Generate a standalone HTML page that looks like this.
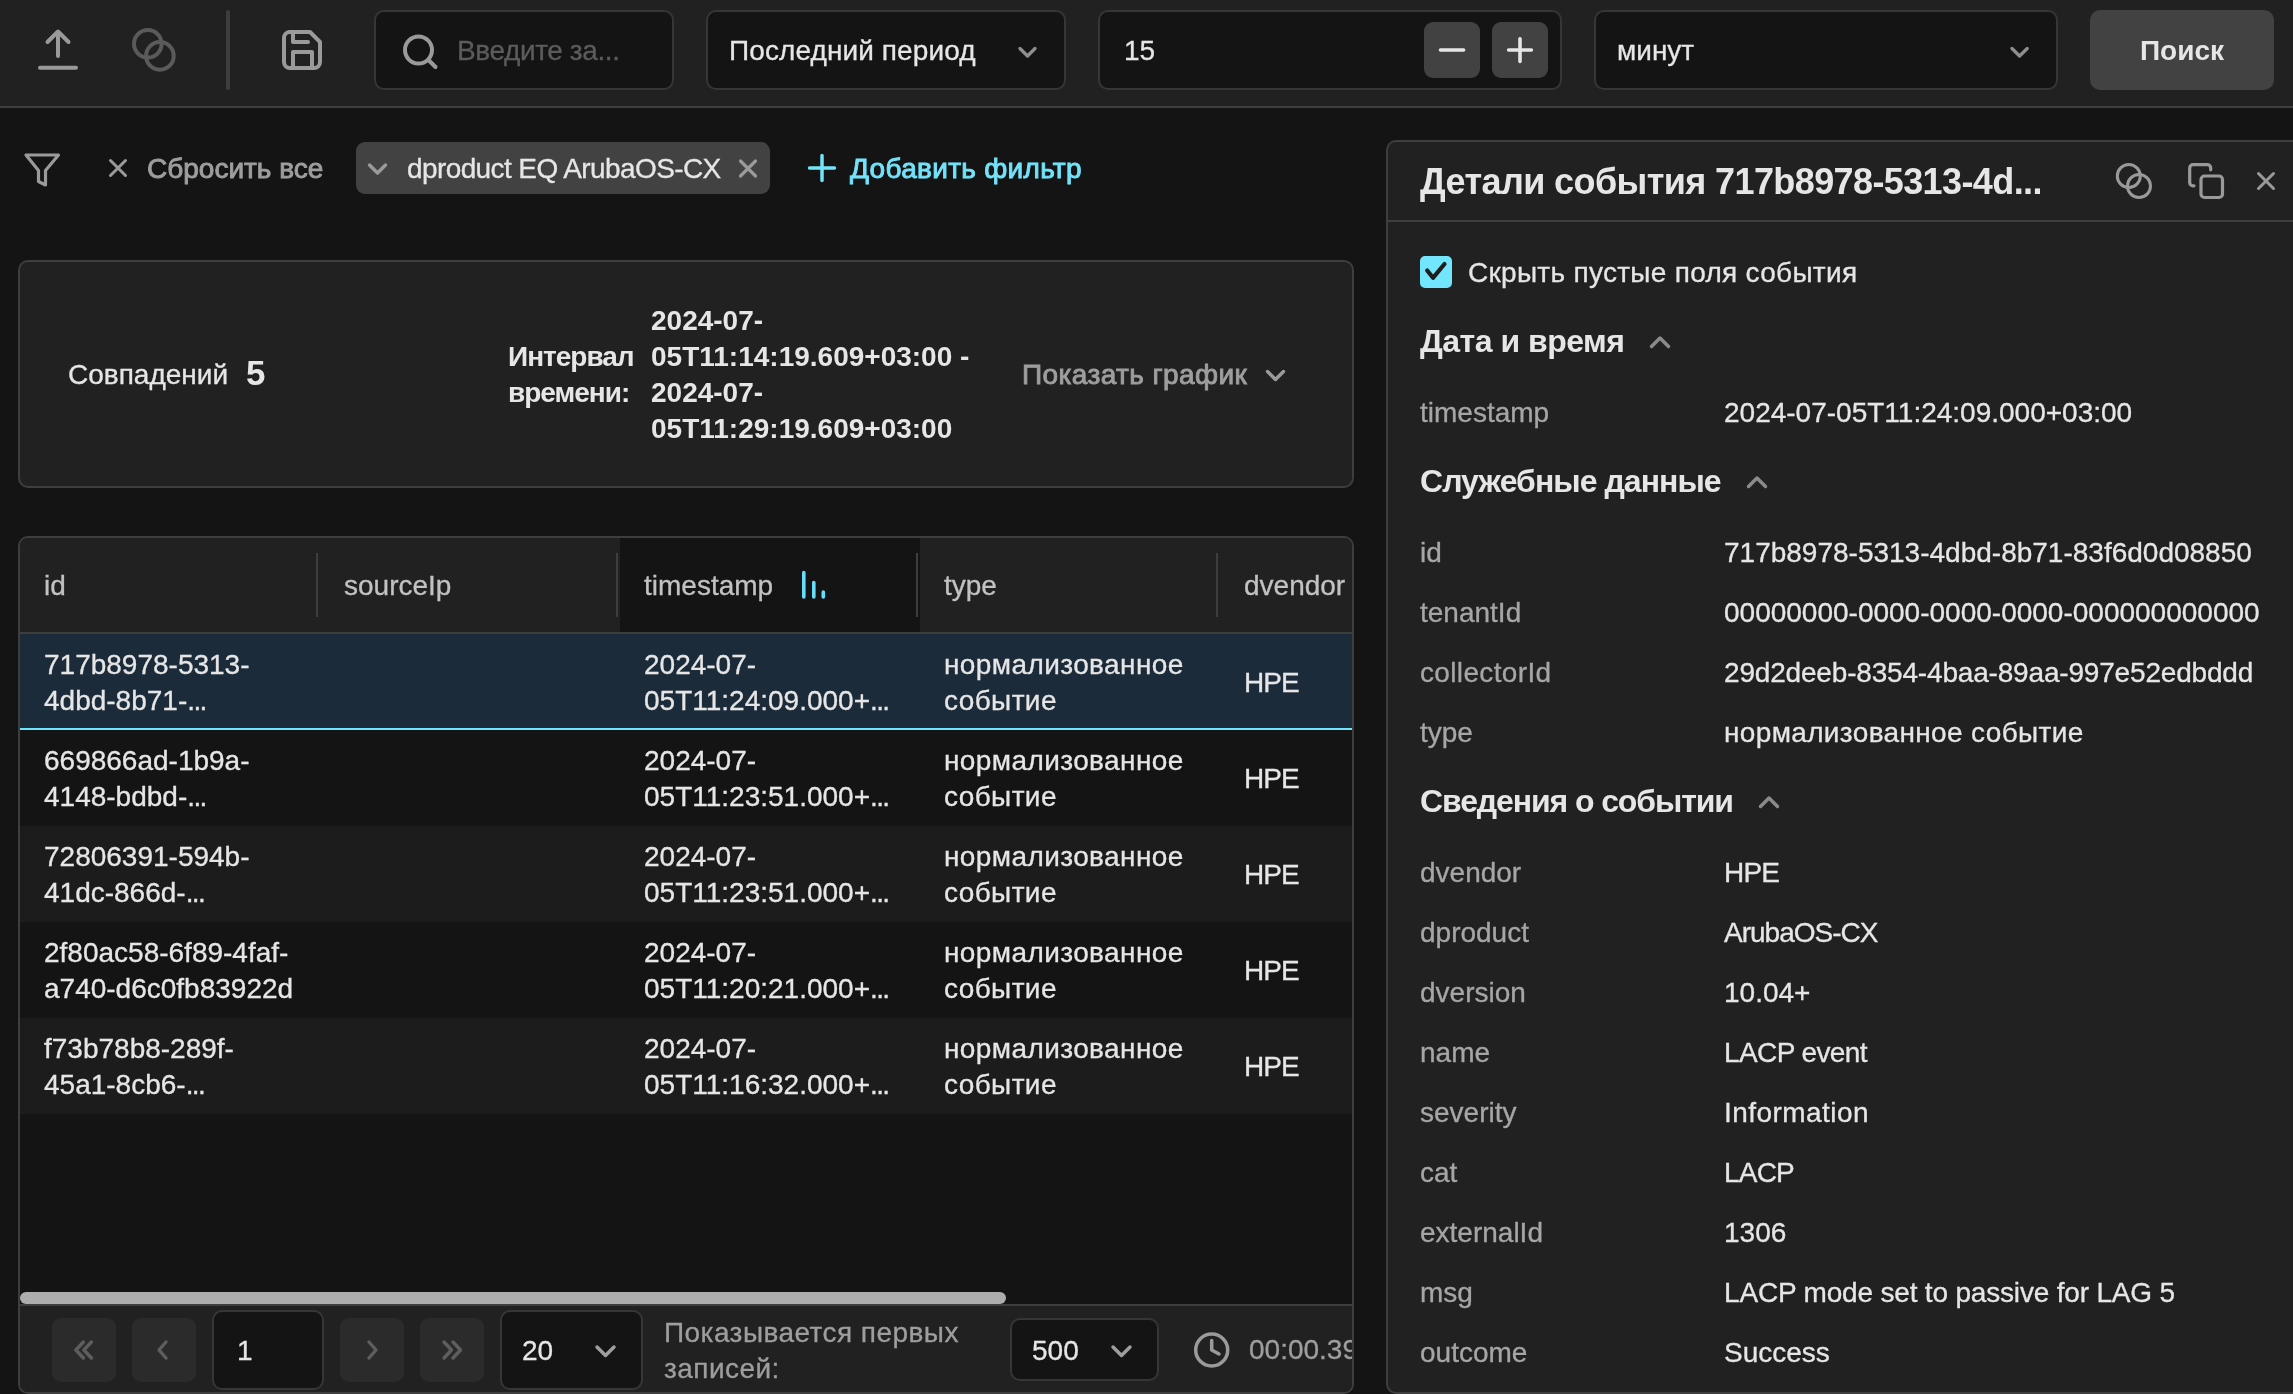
<!DOCTYPE html>
<html><head><meta charset="utf-8">
<style>
*{box-sizing:border-box}
html,body{margin:0;padding:0}
body{-webkit-text-stroke:0.3px currentColor;-webkit-font-smoothing:antialiased;width:2293px;height:1394px;overflow:hidden;background:#141414;font-family:"Liberation Sans",sans-serif;color:#e6e6e6;position:relative;font-size:28px;line-height:36px}
.a{position:absolute;will-change:transform}
.t{will-change:transform;position:absolute;white-space:nowrap;line-height:36px;font-size:28px;margin-top:1px}
svg{position:absolute;overflow:visible}
.hdr{left:0;top:0;width:2293px;height:108px;background:#212121;border-bottom:2px solid #3e3e3e}
.inp{position:absolute;background:#141414;border:2px solid #363636;border-radius:10px}
.btn{position:absolute;background:#424242;border-radius:10px}
.med{-webkit-text-stroke:0.9px currentColor}
.box{position:absolute;background:#212121;border:2px solid #3e3e3e;border-radius:10px}
.g{color:#9e9e9e}
.hd{color:#c2c2c2}
[style*="font-weight:700"]{-webkit-text-stroke:0}
</style></head><body>

<!-- TOP HEADER -->
<div class="a hdr"></div>
<!-- upload icon -->
<svg style="left:0;top:0" width="100" height="100" viewBox="0 0 100 100">
 <path d="M58 56 V32 M47.5 42 L58 31.5 L68.5 42 M40 67.8 H76" fill="none" stroke="#9a9a9a" stroke-width="4" stroke-linecap="round" stroke-linejoin="round"/>
</svg>
<!-- circles icon (disabled) -->
<svg style="left:0;top:0" width="200" height="100" viewBox="0 0 200 100">
 <circle cx="147.8" cy="43.8" r="13.8" fill="none" stroke="#5a5a5a" stroke-width="4"/>
 <circle cx="159.9" cy="55.9" r="13.8" fill="none" stroke="#5a5a5a" stroke-width="4"/>
</svg>
<div class="a" style="left:226px;top:10px;width:4px;height:80px;background:#3d3d3d;border-radius:2px"></div>
<!-- save icon -->
<svg style="left:0;top:0" width="340" height="100" viewBox="0 0 340 100">
 <path d="M289 32 H310 L320 42 V62 A6 6 0 0 1 314 68 H290 A6 6 0 0 1 284 62 V38 A6 6 0 0 1 290 32 Z" fill="none" stroke="#9a9a9a" stroke-width="4" stroke-linejoin="round"/>
 <path d="M293 32 V42 H308" fill="none" stroke="#9a9a9a" stroke-width="4" stroke-linecap="round" stroke-linejoin="round"/>
 <path d="M293 68 V52 H312 V68" fill="none" stroke="#9a9a9a" stroke-width="4" stroke-linejoin="round"/>
</svg>
<!-- search input -->
<div class="inp" style="left:374px;top:10px;width:300px;height:80px"></div>
<svg style="left:0;top:0" width="460" height="100" viewBox="0 0 460 100">
 <circle cx="418.5" cy="50" r="13.5" fill="none" stroke="#9a9a9a" stroke-width="4"/>
 <path d="M428.5 60 L435.5 67" stroke="#9a9a9a" stroke-width="4" stroke-linecap="round"/>
</svg>
<div class="t" style="left:457px;top:32px;color:#5c5c5c;letter-spacing:-0.4px">Введите за...</div>

<!-- period select -->
<div class="inp" style="left:706px;top:10px;width:360px;height:80px"></div>
<div class="t" style="left:728.5px;top:32px;color:#e6e6e6;letter-spacing:0.1px">Последний период</div>
<svg style="left:0;top:0" width="1100" height="100" viewBox="0 0 1100 100">
 <path d="M1020 48.5 L1027.5 56 L1035 48.5" fill="none" stroke="#8e8e8e" stroke-width="3.3" stroke-linecap="round" stroke-linejoin="round"/>
</svg>

<!-- number input -->
<div class="inp" style="left:1098px;top:10px;width:464px;height:80px"></div>
<div class="t" style="left:1124px;top:32px;color:#e6e6e6">15</div>
<div class="btn" style="left:1424px;top:22px;width:56px;height:56px;border-radius:9px"></div>
<div class="btn" style="left:1492px;top:22px;width:56px;height:56px;border-radius:9px"></div>
<svg style="left:0;top:0" width="1600" height="100" viewBox="0 0 1600 100">
 <path d="M1440.5 50 H1463.6 M1508.6 50 H1531.4 M1520 38.8 V61.4" stroke="#e6e6e6" stroke-width="3.6" stroke-linecap="round"/>
</svg>

<!-- minute select -->
<div class="inp" style="left:1594px;top:10px;width:464px;height:80px"></div>
<div class="t" style="left:1617px;top:32px;color:#e6e6e6">минут</div>
<svg style="left:0;top:0" width="2100" height="100" viewBox="0 0 2100 100">
 <path d="M2012 48.5 L2019.6 56 L2027.2 48.5" fill="none" stroke="#8e8e8e" stroke-width="3.3" stroke-linecap="round" stroke-linejoin="round"/>
</svg>
<!-- search button -->
<div class="btn" style="left:2090px;top:10px;width:184px;height:80px"></div>
<div class="t" style="left:2090px;top:32px;width:184px;text-align:center;font-weight:700;color:#e6e6e6">Поиск</div>

<!-- FILTER BAR -->
<svg style="left:0;top:0" width="100" height="200" viewBox="0 0 100 200">
 <path d="M26 155 H58.5 L45.5 170.5 V185 L38.5 181.5 V170.5 Z" fill="none" stroke="#9a9a9a" stroke-width="3.2" stroke-linejoin="round"/>
</svg>
<svg style="left:0;top:0" width="140" height="200" viewBox="0 0 140 200">
 <path d="M110.5 160.5 L125.5 175.5 M125.5 160.5 L110.5 175.5" stroke="#9a9a9a" stroke-width="3" stroke-linecap="round"/>
</svg>
<div class="t med g" style="left:147px;top:150px">Сбросить все</div>
<div class="btn" style="left:356px;top:142px;width:414px;height:52px;border-radius:9px"></div>
<svg style="left:0;top:0" width="800" height="200" viewBox="0 0 800 200">
 <path d="M369.5 165 L377.5 173 L385.5 165" fill="none" stroke="#9a9a9a" stroke-width="3.5" stroke-linecap="round" stroke-linejoin="round"/>
 <path d="M740.5 161 L755.5 176 M755.5 161 L740.5 176" stroke="#9a9a9a" stroke-width="3.2" stroke-linecap="round"/>
</svg>
<div class="t" style="left:407px;top:150px;color:#e6e6e6;letter-spacing:-0.6px">dproduct EQ ArubaOS-CX</div>
<svg style="left:0;top:0" width="900" height="200" viewBox="0 0 900 200">
 <path d="M809.5 168 H834.5 M822 155.5 V180.5" stroke="#72e3fa" stroke-width="3.5" stroke-linecap="round"/>
</svg>
<div class="t med" style="left:850px;top:150px;color:#72e3fa;letter-spacing:0.3px">Добавить фильтр</div>

<!-- STATS BOX -->
<div class="box" style="left:18px;top:260px;width:1336px;height:228px"></div>
<div class="t" style="left:68px;top:356px;color:#e6e6e6">Совпадений</div>
<div class="t" style="left:246px;top:352px;font-size:35px;line-height:40px;font-weight:700;color:#e6e6e6">5</div>
<div class="t" style="left:508px;top:338px;color:#e6e6e6;font-weight:700;letter-spacing:-1px">Интервал</div>
<div class="t" style="left:508px;top:374px;color:#e6e6e6;font-weight:700;letter-spacing:-1px">времени:</div>
<div class="a" style="left:651px;top:303px;color:#e6e6e6;font-weight:700;white-space:nowrap">2024-07-<br>05T11:14:19.609+03:00 -<br>2024-07-<br>05T11:29:19.609+03:00</div>
<div class="t med g" style="left:1022px;top:356px;letter-spacing:0.4px">Показать график</div>
<svg style="left:0;top:0" width="1300" height="400" viewBox="0 0 1300 400">
 <path d="M1267.5 371.5 L1275.5 379.5 L1283.5 371.5" fill="none" stroke="#9a9a9a" stroke-width="3.5" stroke-linecap="round" stroke-linejoin="round"/>
</svg>

<!-- TABLE -->
<div class="a" style="left:18px;top:536px;width:1336px;height:858px;border:2px solid #3e3e3e;border-radius:10px;background:#141414;overflow:hidden">
<div class="a" style="left:0;top:0;width:1332px;height:94px;background:#212121;border-bottom:2px solid #3e3e3e;box-sizing:content-box"></div>
<div class="a" style="left:600px;top:0;width:300px;height:94px;background:#141414"></div>
<div class="a" style="left:296px;top:15px;width:2px;height:64px;background:#3e3e3e"></div>
<div class="a" style="left:596px;top:15px;width:2px;height:64px;background:#3e3e3e"></div>
<div class="a" style="left:896px;top:15px;width:2px;height:64px;background:#3e3e3e"></div>
<div class="a" style="left:1196px;top:15px;width:2px;height:64px;background:#3e3e3e"></div>
<div class="t hd" style="left:24px;top:29px">id</div>
<div class="t hd" style="left:324px;top:29px">sourceIp</div>
<div class="t hd" style="left:624px;top:29px">timestamp</div>
<div class="t hd" style="left:924px;top:29px">type</div>
<div class="t hd" style="left:1224px;top:29px">dvendor</div>
<svg style="left:0;top:0" width="900" height="100" viewBox="0 0 900 100"><path d="M783.8 34.5 V59 M793.8 44.5 V59 M803.3 54 V59" stroke="#66dcf8" stroke-width="3.6" stroke-linecap="round"/></svg>
<div class="a" style="left:0;top:96px;width:1332px;height:94px;background:#1c2b3a"></div>
<div class="a" style="left:0;top:190px;width:1332px;height:2px;background:#6ee3fb"></div>
<div class="a" style="left:24px;top:109px;white-space:nowrap">717b8978-5313-<br>4dbd-8b71-<span style="letter-spacing:-1.6px">...</span></div>
<div class="a" style="left:624px;top:109px;white-space:nowrap">2024-07-<br>05T11:24:09.000+<span style="letter-spacing:-1.6px">...</span></div>
<div class="a" style="left:924px;top:109px;white-space:nowrap;letter-spacing:0.4px">нормализованное<br>событие</div>
<div class="t" style="left:1224px;top:126px;letter-spacing:-1px">HPE</div>
<div class="a" style="left:0;top:192px;width:1332px;height:96px;background:#141414"></div>
<div class="a" style="left:24px;top:205px;white-space:nowrap">669866ad-1b9a-<br>4148-bdbd-<span style="letter-spacing:-1.6px">...</span></div>
<div class="a" style="left:624px;top:205px;white-space:nowrap">2024-07-<br>05T11:23:51.000+<span style="letter-spacing:-1.6px">...</span></div>
<div class="a" style="left:924px;top:205px;white-space:nowrap;letter-spacing:0.4px">нормализованное<br>событие</div>
<div class="t" style="left:1224px;top:222px;letter-spacing:-1px">HPE</div>
<div class="a" style="left:0;top:288px;width:1332px;height:96px;background:#1c1c1c"></div>
<div class="a" style="left:24px;top:301px;white-space:nowrap">72806391-594b-<br>41dc-866d-<span style="letter-spacing:-1.6px">...</span></div>
<div class="a" style="left:624px;top:301px;white-space:nowrap">2024-07-<br>05T11:23:51.000+<span style="letter-spacing:-1.6px">...</span></div>
<div class="a" style="left:924px;top:301px;white-space:nowrap;letter-spacing:0.4px">нормализованное<br>событие</div>
<div class="t" style="left:1224px;top:318px;letter-spacing:-1px">HPE</div>
<div class="a" style="left:0;top:384px;width:1332px;height:96px;background:#141414"></div>
<div class="a" style="left:24px;top:397px;white-space:nowrap">2f80ac58-6f89-4faf-<br>a740-d6c0fb83922d</div>
<div class="a" style="left:624px;top:397px;white-space:nowrap">2024-07-<br>05T11:20:21.000+<span style="letter-spacing:-1.6px">...</span></div>
<div class="a" style="left:924px;top:397px;white-space:nowrap;letter-spacing:0.4px">нормализованное<br>событие</div>
<div class="t" style="left:1224px;top:414px;letter-spacing:-1px">HPE</div>
<div class="a" style="left:0;top:480px;width:1332px;height:96px;background:#1c1c1c"></div>
<div class="a" style="left:24px;top:493px;white-space:nowrap">f73b78b8-289f-<br>45a1-8cb6-<span style="letter-spacing:-1.6px">...</span></div>
<div class="a" style="left:624px;top:493px;white-space:nowrap">2024-07-<br>05T11:16:32.000+<span style="letter-spacing:-1.6px">...</span></div>
<div class="a" style="left:924px;top:493px;white-space:nowrap;letter-spacing:0.4px">нормализованное<br>событие</div>
<div class="t" style="left:1224px;top:510px;letter-spacing:-1px">HPE</div>
<div class="a" style="left:0;top:754px;width:986px;height:12px;background:#adadad;border-radius:6px"></div>
<div class="a" style="left:0;top:766px;width:1332px;height:90px;background:#212121;border-top:2px solid #3e3e3e"></div>
</div>
<div class="a" style="left:52px;top:1318px;width:64px;height:64px;background:#2b2b2b;border-radius:9px"></div>
<div class="a" style="left:132px;top:1318px;width:64px;height:64px;background:#2b2b2b;border-radius:9px"></div>
<div class="a" style="left:340px;top:1318px;width:64px;height:64px;background:#2b2b2b;border-radius:9px"></div>
<div class="a" style="left:420px;top:1318px;width:64px;height:64px;background:#2b2b2b;border-radius:9px"></div>

<div class="inp" style="left:212px;top:1310px;width:112px;height:80px"></div>
<div class="t" style="left:237px;top:1332px">1</div>
<div class="inp" style="left:500px;top:1310px;width:143px;height:80px"></div>
<div class="t" style="left:522px;top:1332px">20</div>
<div class="a g" style="left:664px;top:1315px;white-space:nowrap;letter-spacing:0.45px">Показывается первых<br>записей:</div>
<div class="inp" style="left:1010px;top:1318px;width:149px;height:63px"></div>
<div class="t" style="left:1032px;top:1332px">500</div>
<svg style="left:0;top:0" width="1300" height="1394" viewBox="0 0 1300 1394">
 <path d="M1113 1347 L1121.5 1355.5 L1130 1347" fill="none" stroke="#9e9e9e" stroke-width="3.5" stroke-linecap="round" stroke-linejoin="round"/>
 <circle cx="1211.7" cy="1350" r="16" fill="none" stroke="#9a9a9a" stroke-width="3.5"/>
 <path d="M1211.7 1340.5 V1350 L1219 1354" fill="none" stroke="#9a9a9a" stroke-width="3.5" stroke-linecap="round" stroke-linejoin="round"/>
</svg>
<div class="a" style="left:1240px;top:1310px;width:112px;height:80px;overflow:hidden"><div class="t g" style="left:8.5px;top:21px">00:00.39</div></div>
<svg style="left:0;top:0" width="700" height="1394" viewBox="0 0 700 1394">
 <path d="M83.4 1342 L75.9 1350 L83.4 1358 M91.4 1342 L83.9 1350 L91.4 1358" fill="none" stroke="#5e5e5e" stroke-width="3.4" stroke-linecap="round" stroke-linejoin="round"/>
 <path d="M166 1342 L159 1350 L166 1358" fill="none" stroke="#5e5e5e" stroke-width="3.4" stroke-linecap="round" stroke-linejoin="round"/>
 <path d="M369 1342 L376 1350 L369 1358" fill="none" stroke="#5e5e5e" stroke-width="3.4" stroke-linecap="round" stroke-linejoin="round"/>
 <path d="M444 1342 L451.5 1350 L444 1358 M453 1342 L460.5 1350 L453 1358" fill="none" stroke="#5e5e5e" stroke-width="3.4" stroke-linecap="round" stroke-linejoin="round"/>
 <path d="M597 1347 L605.5 1355.5 L614 1347" fill="none" stroke="#9e9e9e" stroke-width="3.5" stroke-linecap="round" stroke-linejoin="round"/>
</svg>
<!-- RIGHT PANEL -->
<div class="a" style="left:1386px;top:140px;width:920px;height:1254px;background:#212121;border:2px solid #3e3e3e;border-radius:10px"></div>
<div class="a" style="left:1388px;top:220px;width:910px;height:2px;background:#3e3e3e"></div>
<div class="t" style="left:1420px;top:161px;font-size:36px;line-height:40px;font-weight:700;color:#e6e6e6;letter-spacing:-0.6px">Детали события 717b8978-5313-4d...</div>
<svg style="left:0;top:0" width="2293" height="300" viewBox="0 0 2293 300">
 <circle cx="2128.8" cy="176" r="11.5" fill="none" stroke="#9a9a9a" stroke-width="3"/>
 <circle cx="2139" cy="186" r="11.5" fill="none" stroke="#9a9a9a" stroke-width="3"/>
 <path d="M2194 185.8 H2193 A3.3 3.3 0 0 1 2189.7 182.5 V168 A3.3 3.3 0 0 1 2193 164.7 H2207.4 A3.3 3.3 0 0 1 2210.7 168 V169.8" fill="none" stroke="#9a9a9a" stroke-width="3.2" stroke-linecap="round"/>
 <rect x="2201" y="176" width="21.5" height="21.5" rx="3.5" fill="none" stroke="#9a9a9a" stroke-width="3.2"/>
 <path d="M2258.5 173.5 L2273.5 188.5 M2273.5 173.5 L2258.5 188.5" stroke="#9a9a9a" stroke-width="3" stroke-linecap="round"/>
</svg>
<div class="a" style="left:1420px;top:256px;width:32px;height:32px;background:#72e6fc;border-radius:5px"></div>
<svg style="left:0;top:0" width="1500" height="300" viewBox="0 0 1500 300"><path d="M1427.2 270.5 L1433 277.8 L1444.5 264" fill="none" stroke="#1e1e1e" stroke-width="4.2" stroke-linecap="round" stroke-linejoin="round"/></svg>
<div class="t" style="left:1468px;top:254px;color:#e6e6e6;letter-spacing:0.3px">Скрыть пустые поля события</div>
<div class="t" style="left:1420px;top:320px;font-size:32px;line-height:40px;font-weight:700;color:#e6e6e6;letter-spacing:-0.5px">Дата и время</div>
<svg style="left:0;top:0" width="2000" height="1394" viewBox="0 0 2000 1394"><path d="M1651.5 346.5 L1660 338 L1668.5 346.5" fill="none" stroke="#8a8a8a" stroke-width="3.5" stroke-linecap="round" stroke-linejoin="round"/></svg>
<div class="t g" style="color:#a6a6a6;left:1420px;top:394px">timestamp</div>
<div class="t" style="left:1724px;top:394px;color:#e6e6e6">2024-07-05T11:24:09.000+03:00</div>
<div class="t" style="left:1420px;top:460px;font-size:32px;line-height:40px;font-weight:700;color:#e6e6e6;letter-spacing:-0.95px">Служебные данные</div>
<svg style="left:0;top:0" width="2000" height="1394" viewBox="0 0 2000 1394"><path d="M1748.5 486.5 L1757 478 L1765.5 486.5" fill="none" stroke="#8a8a8a" stroke-width="3.5" stroke-linecap="round" stroke-linejoin="round"/></svg>
<div class="t g" style="color:#a6a6a6;left:1420px;top:534px">id</div>
<div class="t" style="left:1724px;top:534px;color:#e6e6e6">717b8978-5313-4dbd-8b71-83f6d0d08850</div>
<div class="t g" style="color:#a6a6a6;left:1420px;top:594px">tenantId</div>
<div class="t" style="left:1724px;top:594px;color:#e6e6e6">00000000-0000-0000-0000-000000000000</div>
<div class="t g" style="color:#a6a6a6;left:1420px;top:654px;letter-spacing:0.35px">collectorId</div>
<div class="t" style="left:1724px;top:654px;color:#e6e6e6;letter-spacing:-0.18px">29d2deeb-8354-4baa-89aa-997e52edbddd</div>
<div class="t g" style="color:#a6a6a6;left:1420px;top:714px">type</div>
<div class="t" style="left:1724px;top:714px;color:#e6e6e6;letter-spacing:0.35px">нормализованное событие</div>
<div class="t" style="left:1420px;top:780px;font-size:32px;line-height:40px;font-weight:700;color:#e6e6e6;letter-spacing:-1.1px">Сведения о событии</div>
<svg style="left:0;top:0" width="2000" height="1394" viewBox="0 0 2000 1394"><path d="M1760.5 806.5 L1769 798 L1777.5 806.5" fill="none" stroke="#8a8a8a" stroke-width="3.5" stroke-linecap="round" stroke-linejoin="round"/></svg>
<div class="t g" style="color:#a6a6a6;left:1420px;top:854px">dvendor</div>
<div class="t" style="left:1724px;top:854px;color:#e6e6e6;letter-spacing:-0.8px">HPE</div>
<div class="t g" style="color:#a6a6a6;left:1420px;top:914px">dproduct</div>
<div class="t" style="left:1724px;top:914px;color:#e6e6e6;letter-spacing:-1.0px">ArubaOS-CX</div>
<div class="t g" style="color:#a6a6a6;left:1420px;top:974px">dversion</div>
<div class="t" style="left:1724px;top:974px;color:#e6e6e6">10.04+</div>
<div class="t g" style="color:#a6a6a6;left:1420px;top:1034px">name</div>
<div class="t" style="left:1724px;top:1034px;color:#e6e6e6;letter-spacing:-0.6px">LACP event</div>
<div class="t g" style="color:#a6a6a6;left:1420px;top:1094px">severity</div>
<div class="t" style="left:1724px;top:1094px;color:#e6e6e6;letter-spacing:0.45px">Information</div>
<div class="t g" style="color:#a6a6a6;left:1420px;top:1154px">cat</div>
<div class="t" style="left:1724px;top:1154px;color:#e6e6e6;letter-spacing:-0.8px">LACP</div>
<div class="t g" style="color:#a6a6a6;left:1420px;top:1214px">externalId</div>
<div class="t" style="left:1724px;top:1214px;color:#e6e6e6">1306</div>
<div class="t g" style="color:#a6a6a6;left:1420px;top:1274px">msg</div>
<div class="t" style="left:1724px;top:1274px;color:#e6e6e6;letter-spacing:-0.18px">LACP mode set to passive for LAG 5</div>
<div class="t g" style="color:#a6a6a6;left:1420px;top:1334px">outcome</div>
<div class="t" style="left:1724px;top:1334px;color:#e6e6e6">Success</div>
</body></html>
